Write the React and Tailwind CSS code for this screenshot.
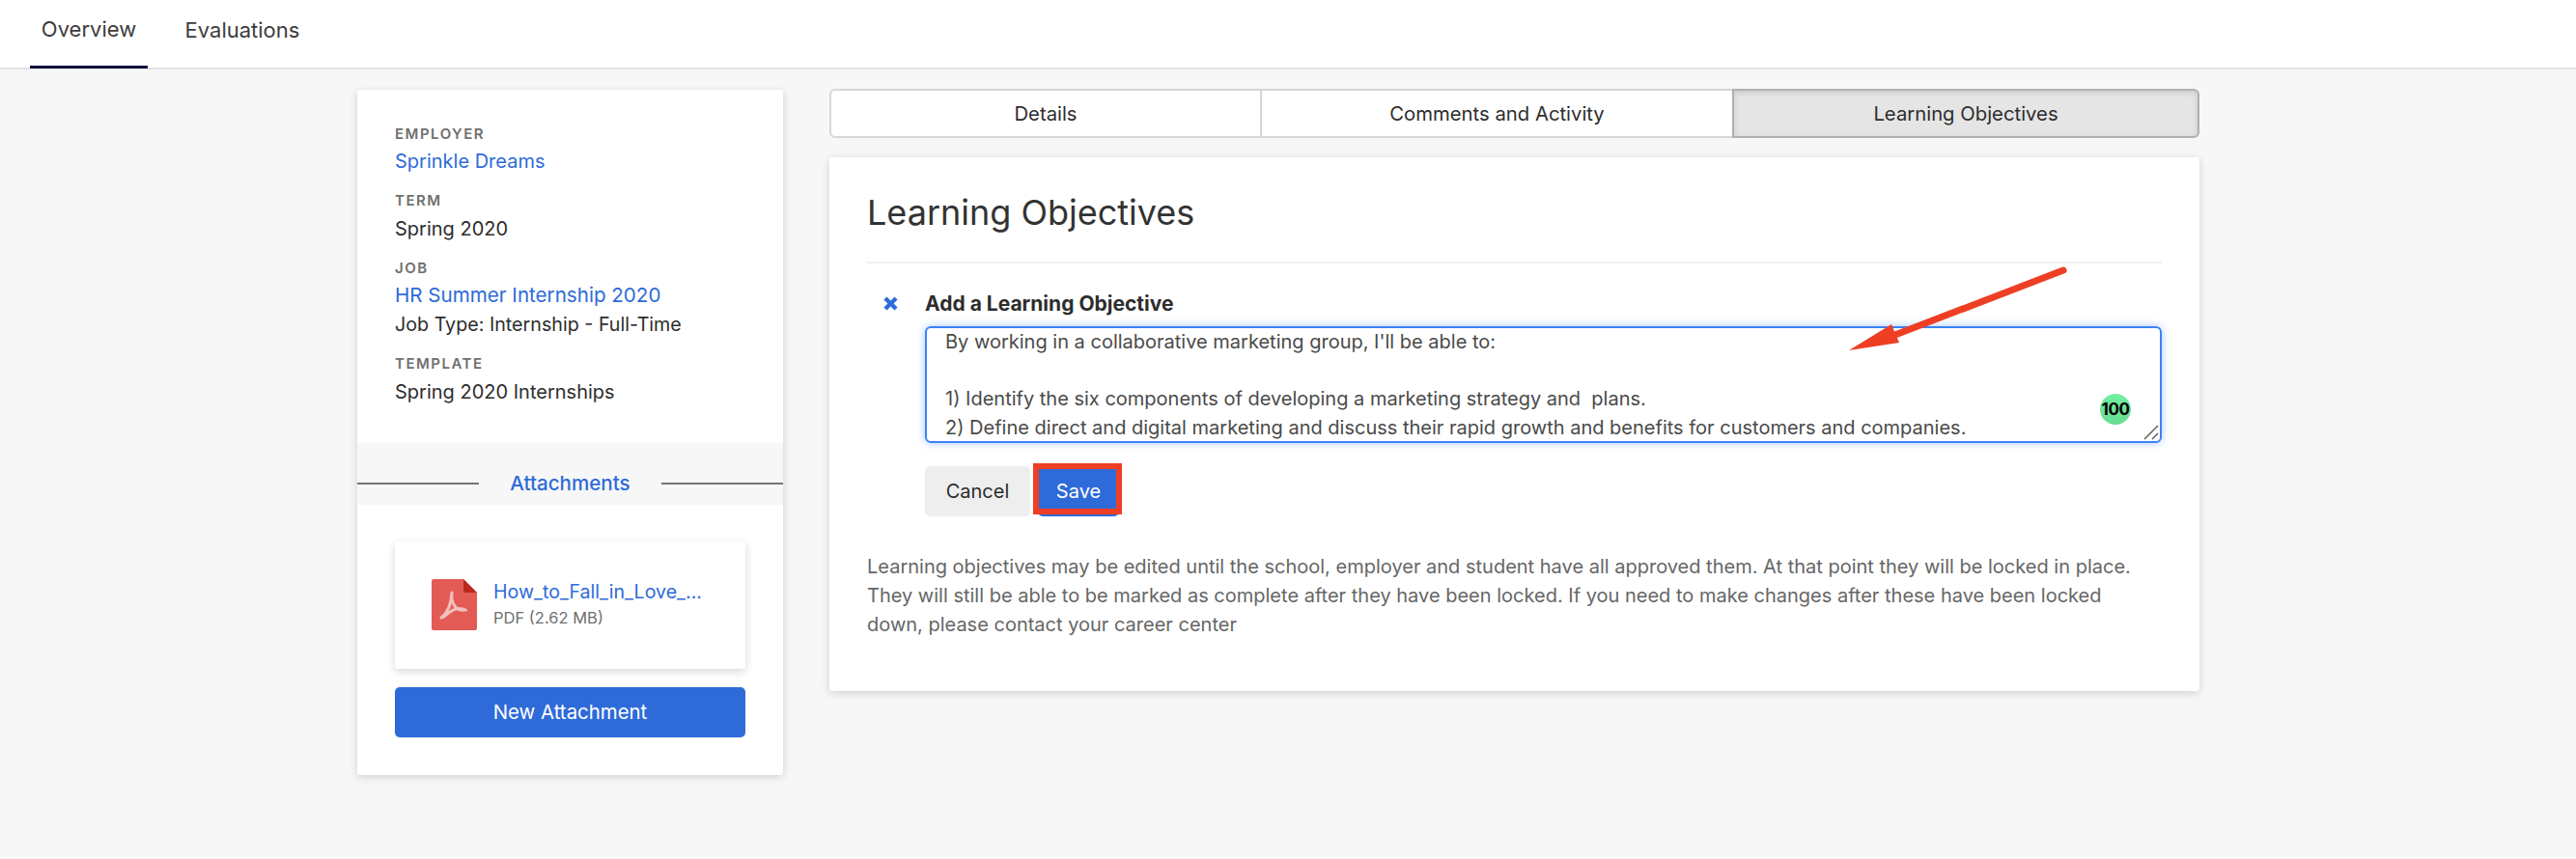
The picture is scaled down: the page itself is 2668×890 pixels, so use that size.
import React from "react";

const Label = ({ children, className = "" }) => (
  <div className={`text-[15px] leading-[20px] font-semibold tracking-[1.5px] text-[#6f6f6f] ${className}`}>{children}</div>
);

const objective = `By working in a collaborative marketing group, I'll be able to:

1) Identify the six components of developing a marketing strategy and  plans.
2) Define direct and digital marketing and discuss their rapid growth and benefits for customers and companies.`;

export default function App() {
  return (
    <div className="relative min-h-[890px] bg-[#f7f7f7] text-[#2d2d2d] font-['Inter',sans-serif] text-[20px] leading-[30px]">
      <header className="h-[72px] bg-white border-b-2 border-[#e3e3e3] flex pl-[31px] items-stretch text-[22px]">
        <div className="w-[122px] flex items-center justify-center border-b-[3px] border-[#12123f] -mb-[1px] pb-[8px] text-[#3c3c3c]">Overview</div>
        <div className="ml-[18px] w-[160px] flex items-center justify-center pb-[8px] text-[#3c3c3c]">Evaluations</div>
      </header>

      <main className="flex items-start pl-[370px] pt-[21px] gap-[48px]">
        <aside className="w-[441px] bg-white rounded-[3px] shadow-[0_2px_8px_rgba(0,0,0,0.16)] overflow-hidden">
          <div className="px-[39px] pt-[36px] h-[366px]">
            <Label>EMPLOYER</Label>
            <div className="text-[#2e6bd9] mt-[3px]">Sprinkle Dreams</div>
            <Label className="mt-[16px]">TERM</Label>
            <div className="mt-[4px]">Spring 2020</div>
            <Label className="mt-[16px]">JOB</Label>
            <div className="text-[#2e6bd9] text-[20.6px] mt-[3px]">HR Summer Internship 2020</div>
            <div className="text-[19.7px]">Job Type: Internship - Full-Time</div>
            <Label className="mt-[16px]">TEMPLATE</Label>
            <div className="mt-[4px]">Spring 2020 Internships</div>
          </div>
          <div className="h-[64px] bg-[#f7f7f7] flex items-center pt-[20px]">
            <div className="w-[126px] h-[2px] bg-[#757575]" />
            <div className="flex-1 text-center text-[#2e6bd9] font-medium text-[20.6px]">Attachments</div>
            <div className="w-[126px] h-[2px] bg-[#757575]" />
          </div>
          <div className="px-[39px] pt-[38px] pb-[39px]">
            <div className="h-[132px] bg-white rounded-[3px] shadow-[0_3px_10px_rgba(0,0,0,0.16)] flex items-center pl-[38px] pb-[1px]">
              <svg width="47" height="53" viewBox="0 0 47 53" className="shrink-0">
                <path d="M2 0H33L47 14V51a2 2 0 0 1-2 2H2a2 2 0 0 1-2-2V2a2 2 0 0 1 2-2z" fill="#e25c55" />
                <path d="M33 0L47 14H36a3 3 0 0 1-3-3z" fill="#b92a1c" />
                <path d="M21 14c-1 8 2 14 6 17 3 2 6 1 8.500 1-6-3-13-1-18 3-2.500 2-5 5-7.500 5 4-3 10-10 11-26z" fill="none" stroke="#f3bfbc" strokeWidth="3" strokeLinecap="round" strokeLinejoin="round" />
              </svg>
              <div className="ml-[17px]">
                <div className="text-[#2e6bd9] leading-[26px] text-[19.6px]">How_to_Fall_in_Love_...</div>
                <div className="text-[#6f6f6f] text-[16.5px] leading-[28px]">PDF (2.62 MB)</div>
              </div>
            </div>
            <button className="mt-[19px] w-full h-[52px] rounded-[5px] bg-[#2e6bd9] text-white text-[20.4px]">New Attachment</button>
          </div>
        </aside>

        <section className="w-[1419px]">
          <div className="flex h-[51px] -mt-[1px] text-[20.3px]">
            <div className="w-[448px] flex items-center justify-center bg-white border-2 border-[#d6d6d6] rounded-l-[6px]">Details</div>
            <div className="w-[487px] flex items-center justify-center bg-white border-y-2 border-[#d6d6d6]">Comments and Activity</div>
            <div className="flex-1 flex items-center justify-center bg-[#e5e5e5] border-2 border-[#b0b0b0] rounded-r-[6px] shadow-[inset_0_2px_6px_rgba(0,0,0,0.12)]">Learning Objectives</div>
          </div>
          <div className="mt-[20px] h-[553px] bg-white rounded-[3px] shadow-[0_2px_8px_rgba(0,0,0,0.16)] pt-[36px] px-[39px]">
            <h1 className="text-[36px] leading-[42px] text-[#333] font-normal">Learning Objectives</h1>
            <div className="mt-[30px] h-[2px] bg-[#f0f0f0]" />
            <div className="flex mt-[27px]">
              <div className="w-[60px] pl-[17px] pt-[7px] text-[#2e6bd9]">
                <svg width="15" height="15" viewBox="0 0 18 18" fill="currentColor"><path d="M0.500 4.200L4.200 0.500 9 5.300 13.800 0.500 17.500 4.200 12.700 9 17.500 13.800 13.800 17.500 9 12.700 4.200 17.500 0.500 13.800 5.300 9z" /></svg>
              </div>
              <div className="flex-1">
                <div className="font-bold text-[21px] leading-[30px] text-[#2d2d2d]">Add a Learning Objective</div>
                <div className="relative mt-[8px]">
                  <textarea
                    readOnly
                    defaultValue={objective}
                    className="block w-full h-[121px] overflow-hidden resize-none border-2 border-[#3b82f6] rounded-[6px] px-[19px] py-0 leading-[29.7px] text-[#4a4a4a] shadow-[0_0_8px_rgba(59,130,246,0.45)] outline-none bg-white"
                  />
                  <div className="absolute left-[1217px] top-[70px] w-[32px] h-[32px] rounded-full bg-gradient-to-b from-[#72ef9f] to-[#68dc92] flex items-center justify-center text-black font-bold text-[17px] tracking-[-0.5px]">100</div>
                  <svg className="absolute right-[3px] bottom-[3px]" width="16" height="16" viewBox="0 0 16 16">
                    <path d="M1 15L15 1M9 15L15 9" stroke="#555" strokeWidth="1.400" fill="none" />
                  </svg>
                </div>
                <div className="flex mt-[24px] items-start">
                  <button className="w-[109px] h-[52px] rounded-[5px] bg-[#eeeeee] text-[#2d2d2d]">Cancel</button>
                  <div className="relative ml-[8px]">
                    <button className="block w-[84px] h-[52px] rounded-[5px] bg-[#2e6bd9] text-white">Save</button>
                    <div className="absolute -left-[5px] -right-[3px] -top-[3px] -bottom-[-2px] border-x-[6px] border-y-[6px] border-[#ee3f24]" />
                  </div>
                </div>
              </div>
            </div>
            <div className="mt-[37px] text-[#666] leading-[30px] w-[1340px]">
              Learning objectives may be edited until the school, employer and student have all approved them. At that point they will be locked in place. They will still be able to be marked as complete after they have been locked. If you need to make changes after these have been locked down, please contact your career center
            </div>
          </div>
        </section>
      </main>

      <svg className="absolute left-[1900px] top-[270px] pointer-events-none" width="250" height="105" viewBox="1900 270 250 105">
        <path d="M2137 280L1955 350" stroke="#ee3f24" strokeWidth="7" strokeLinecap="round" />
        <path d="M1915 363L1959 336L1967 355z" fill="#ee3f24" />
      </svg>
    </div>
  );
}
